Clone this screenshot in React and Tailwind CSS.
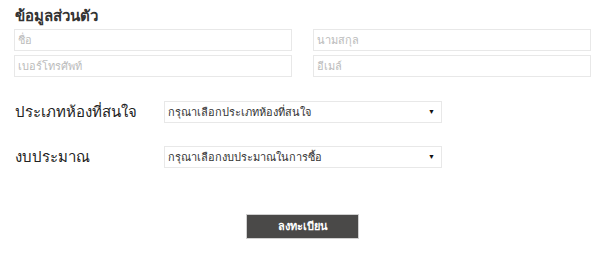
export default function App() {
  return (
    <div className="w-[600px] h-[257px] bg-white font-['Liberation_Sans',sans-serif] text-[#333]">
      <div className="pl-[14px] pr-[9px]">
        <h3 className="pt-[6px] pb-[3px] pl-[1px] text-[15px] leading-[20px] font-bold text-[#333]">ข้อมูลส่วนตัว</h3>
        <div className="grid grid-cols-2 gap-x-[21px] gap-y-[4px]">
          <input className="h-[22px] border border-[#e8e8e8] px-[3px] text-[11px] placeholder:text-[#bbb] outline-none" placeholder="ชื่อ" />
          <input className="h-[22px] border border-[#e8e8e8] px-[3px] text-[11px] placeholder:text-[#bbb] outline-none" placeholder="นามสกุล" />
          <input className="h-[22px] border border-[#e8e8e8] px-[3px] text-[11px] placeholder:text-[#bbb] outline-none" placeholder="เบอร์โทรศัพท์" />
          <input className="h-[22px] border border-[#e8e8e8] px-[3px] text-[11px] placeholder:text-[#bbb] outline-none" placeholder="อีเมล์" />
        </div>
        <div className="mt-[24px] flex flex-col gap-[23px]">
          <div className="flex items-center h-[22px]">
            <label className="w-[150px] pl-[1px] text-[15px] leading-[22px] text-[#222]">ประเภทห้องที่สนใจ</label>
            <div className="relative w-[278px] h-[22px] border border-[#e8e8e8] flex items-center px-[3px] text-[11px] text-[#333]">
              <span>กรุณาเลือกประเภทห้องที่สนใจ</span>
              <span className="absolute right-[6px] top-[6px] text-[7px] leading-none text-[#111]">▼</span>
            </div>
          </div>
          <div className="flex items-center h-[22px]">
            <label className="w-[150px] pl-[1px] text-[15px] leading-[22px] text-[#222]">งบประมาณ</label>
            <div className="relative w-[278px] h-[22px] border border-[#e8e8e8] flex items-center px-[3px] text-[11px] text-[#333]">
              <span>กรุณาเลือกงบประมาณในการซื้อ</span>
              <span className="absolute right-[6px] top-[6px] text-[7px] leading-none text-[#111]">▼</span>
            </div>
          </div>
        </div>
        <div className="mt-[46px] flex pl-[232px]">
          <button className="w-[113px] h-[25px] bg-[#4a4948] border border-[#d0d0d0] text-white text-[11px] font-bold">ลงทะเบียน</button>
        </div>
      </div>
    </div>
  );
}
